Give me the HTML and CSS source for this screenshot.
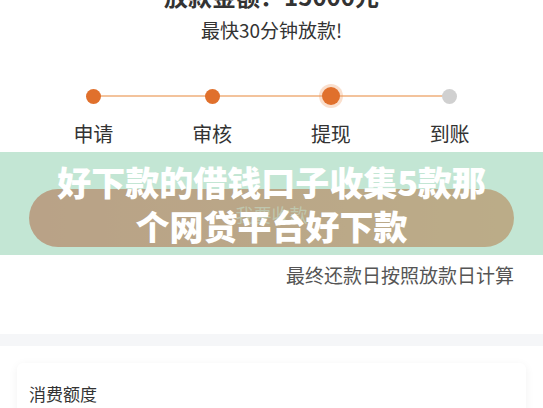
FILE: index.html
```html
<!DOCTYPE html>
<html lang="zh-CN">
<head>
  <meta charset="UTF-8" />
  <meta name="viewport" content="width=device-width, initial-scale=1.0"/>
  <title>好下款</title>
  <link rel="stylesheet" href="styles.css">
</head>
<body>
  <div class="page">
    <section class="loan">
      <h2 class="loan-amount">放款金额：15000元</h2>
      <p class="loan-tip">最快30分钟放款!</p>

      <div class="steps">
        <div class="step done">
          <span class="dot"></span>
          <span class="step-name">申请</span>
        </div>
        <div class="step done">
          <span class="dot"></span>
          <span class="step-name">审核</span>
        </div>
        <div class="step current">
          <span class="dot"></span>
          <span class="step-name">提现</span>
        </div>
        <div class="step">
          <span class="dot"></span>
          <span class="step-name">到账</span>
        </div>
      </div>

      <button class="withdraw-btn">我要收款</button>
      <p class="repay-note">最终还款日按照放款日计算</p>
    </section>

    <div class="divider"></div>

    <section class="card">
      <h3 class="card-title">消费额度</h3>
    </section>

    <!-- article title banner laid over the screenshot -->
    <div class="banner">
      <h1 class="banner-title">好下款的借钱口子收集5款那个网贷平台好下款</h1>
    </div>
  </div>
</body>
</html>
```

FILE: styles.css
```css
html, body {
  margin: 0;
  padding: 0;
  height: 100%;
}

body {
  background: #fff;
  font-family: "Noto Sans CJK SC", "Noto Sans", sans-serif;
  color: #333;
  overflow: hidden;
}

.page {
  position: relative;
  width: 543px;
}

.loan {
  display: flex;
  flex-direction: column;
  align-items: center;
}

.loan-amount {
  margin: -16px 0 0;
  font-size: 24px;
  line-height: 24px;
  font-weight: 700;
  color: #333;
}

.loan-tip {
  margin: 12px 0 0;
  font-size: 19px;
  line-height: 19px;
  color: #333;
}

.steps {
  position: relative;
  align-self: stretch;
  display: grid;
  grid-template-columns: repeat(4, 1fr);
  margin: 45px 34px 0;
}

/* connecting line behind the dots */
.steps::before {
  content: "";
  position: absolute;
  top: 11px;
  left: 12.5%;
  right: 12.5%;
  height: 2px;
  background: #f3c39c;
}

.step {
  position: relative;
  display: flex;
  flex-direction: column;
  align-items: center;
}

.dot {
  width: 15px;
  height: 15px;
  margin: 4.5px 0;
  border-radius: 50%;
  background: #d0d0d0;
}

.step.done .dot {
  background: #e0702c;
}

.step.current .dot {
  width: 18px;
  height: 18px;
  margin: 3px 0;
  background: #e0702c;
  box-shadow: 0 0 0 3px rgba(240, 150, 90, 0.3);
}

.step-name {
  margin-top: 16px;
  font-size: 20px;
  line-height: 20px;
  color: #333;
}

.withdraw-btn {
  align-self: stretch;
  margin: 45px 29px 0;
  height: 58px;
  border: none;
  border-radius: 29px;
  background: linear-gradient(90deg, #e6553f, #ec6f43);
  color: rgba(255, 255, 255, 0.5);
  font-family: inherit;
  font-size: 18px;
  padding: 0 0 8px;
}

.repay-note {
  align-self: stretch;
  margin: 18px 0 0;
  padding-right: 29px;
  text-align: right;
  font-size: 19px;
  line-height: 19px;
  color: #555;
}

.divider {
  height: 12px;
  margin-top: 50px;
  background: #f5f6f8;
}

.card {
  margin: 17px 17px 0;
  padding: 22px 12px 20px;
  background: #fff;
  border-radius: 6px;
  box-shadow: 0 2px 10px rgba(0, 0, 0, 0.06);
}

.card-title {
  margin: 0;
  font-size: 17px;
  line-height: 17px;
  font-weight: 400;
  color: #333;
}

.banner {
  position: absolute;
  top: 152px;
  left: 0;
  right: 0;
  height: 103px;
  padding: 8px 50px 0;
  box-sizing: border-box;
  background: rgba(155, 213, 183, 0.6);
}

.banner-title {
  margin: 0;
  text-align: center;
  font-size: 34px;
  line-height: 44px;
  font-weight: 900;
  color: #fff;
}
```
